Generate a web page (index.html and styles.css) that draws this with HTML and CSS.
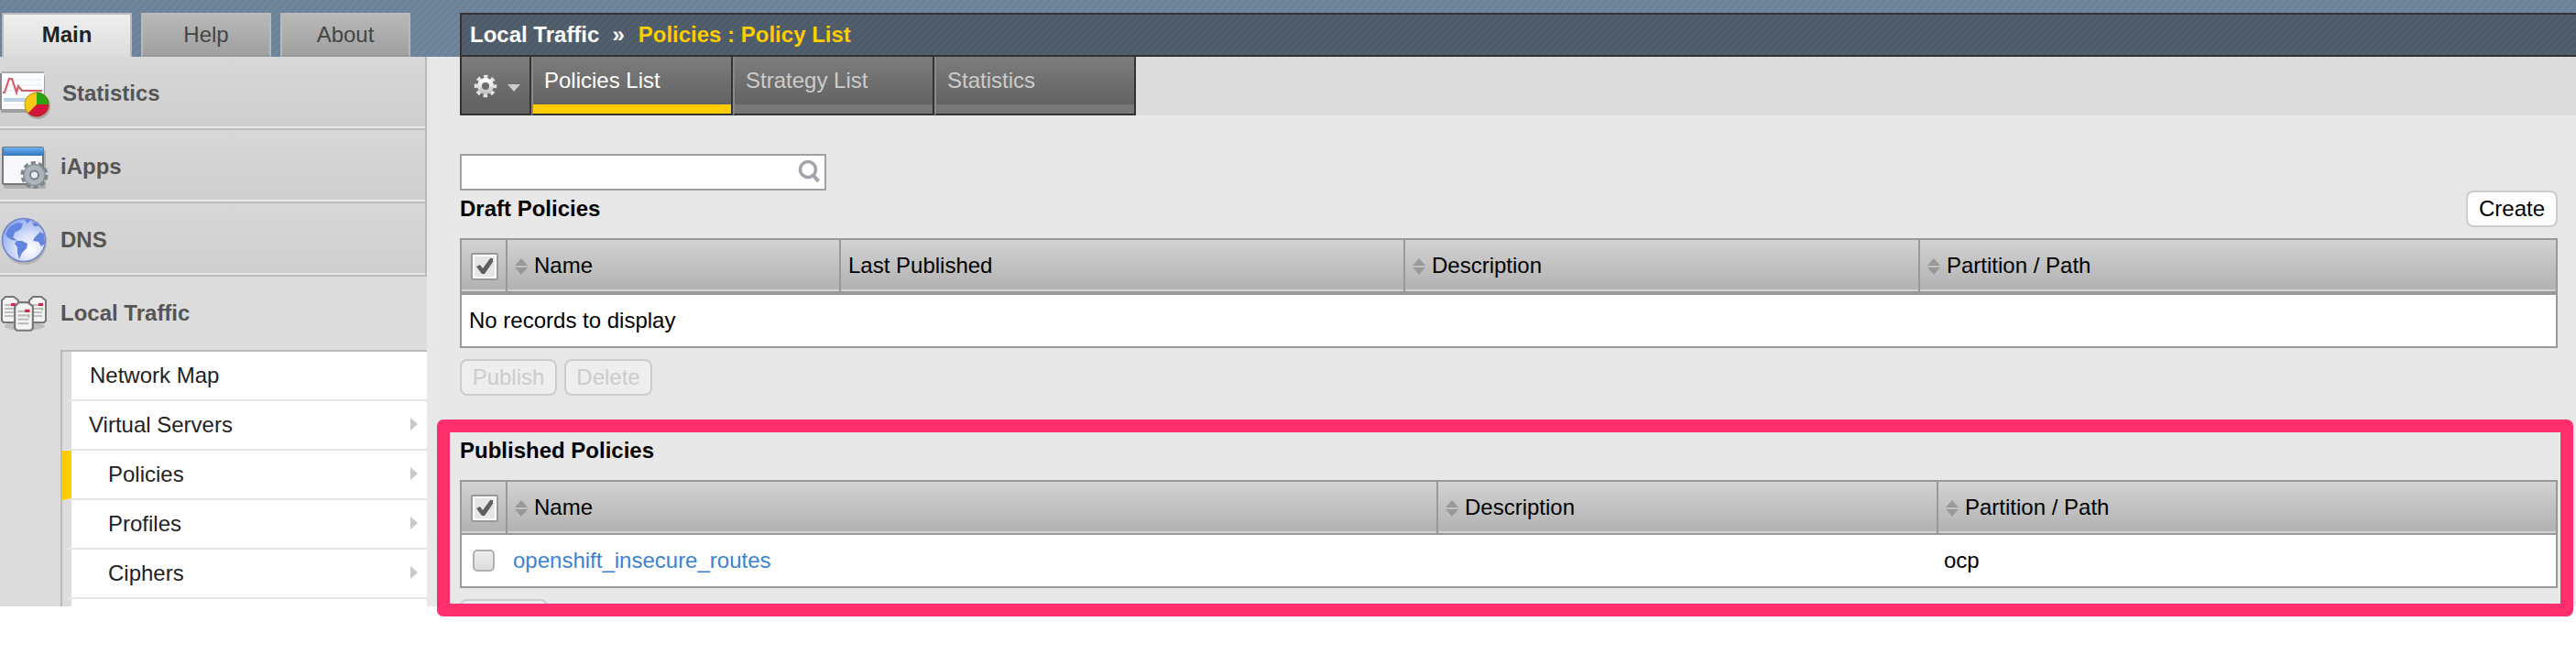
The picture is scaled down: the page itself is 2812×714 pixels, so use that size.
FILE: index.html
```html
<!DOCTYPE html>
<html lang="en">
<head>
<meta charset="utf-8">
<title>Local Traffic - Policy List</title>
<link rel="stylesheet" href="styles.css">
</head>
<body>
<svg width="0" height="0" class="defs">
  <defs>
    <linearGradient id="gearFill" x1="0" y1="0" x2="0" y2="1"><stop offset="0" stop-color="#fff"/><stop offset="1" stop-color="#c4c4c4"/></linearGradient>
    <linearGradient id="blueBar" x1="0" y1="0" x2="0" y2="1"><stop offset="0" stop-color="#68b4f4"/><stop offset="1" stop-color="#3573b8"/></linearGradient>
    <radialGradient id="globe" cx=".65" cy=".7" r=".8"><stop offset="0" stop-color="#fff"/><stop offset=".45" stop-color="#d5defa"/><stop offset="1" stop-color="#86a3ee"/></radialGradient>
    <symbol id="sort" viewBox="0 0 14 18"><path d="M7 0l7 8H0zM0 10h14l-7 8z" fill="#999"/></symbol>
    <symbol id="check" viewBox="0 0 30 30">
      <rect x="1" y="1" width="28" height="28" rx="1" fill="#fff" stroke="#999" stroke-width="2"/>
      <rect x="4" y="4" width="22" height="22" fill="#e6e6e6"/>
      <path d="M6 15l4-2 3 4 8-11h3v4L15 23h-3z" fill="#5f5f5f"/>
    </symbol>
    <symbol id="server" viewBox="0 0 20 32">
      <path d="M1 5l4-4h9l5 4v22l-2 2H3l-2-2z" fill="#f4f4f4" stroke="#777" stroke-width="2"/>
      <path d="M4 10h11M4 14h11M4 18h11M4 22h11" stroke="#bdbdbd" stroke-width="2"/>
      <path d="M11 8h5v3h-5z" fill="#d0284e"/><path d="M14 13h2v3h-2z" fill="#8fd08a"/>
    </symbol>
  </defs>
</svg>
<div class="app">
  <nav class="side">
    <div class="side-tabs">
      <a class="side-tab on">Main</a><a class="side-tab">Help</a><a class="side-tab">About</a>
    </div>
    <a class="section">
      <svg class="sec-icon" viewBox="0 0 56 56">
        <rect x="1" y="8" width="48" height="41" rx="1" fill="#8a8a8a" opacity=".7"/>
        <rect x="2" y="6" width="46" height="39" fill="#fbfcfe"/><path d="M0 6h2v40H0z" fill="#888"/><path d="M2 5h46" stroke="#aaa" stroke-width="2"/>
        <path d="M4 13h42M4 19h42M4 25h42M4 41h42" stroke="#e3e9f4"/><path d="M4 35h26" stroke="#b9d0ea" stroke-width="4"/>
        <path d="M3 27h2l5-15h3l5 15 2-7 4 5h22" fill="none" stroke="#d65c68" stroke-width="2.2"/>
        <circle cx="41" cy="42" r="14" fill="#777" opacity=".45"/>
        <circle cx="40" cy="40" r="13.5" fill="#f7c817"/>
        <path d="M40 40V26.500a13.500 13.500 0 0 1 13.500 13.500z" fill="#2ba50c"/>
        <path d="M40 40h13.500a13.500 13.500 0 0 1-23 9.500z" fill="#d3143b"/>
        <circle cx="40" cy="40" r="13" fill="none" stroke="#664b22" stroke-opacity=".4"/>
      </svg>
      <span>Statistics</span>
    </a>
    <a class="section lean">
      <svg class="sec-icon" viewBox="0 0 56 56">
        <rect x="4" y="10" width="46" height="42" rx="2" fill="#999" opacity=".6"/>
        <rect x="3" y="7" width="44" height="40" rx="1" fill="#f8f8fc" stroke="#777" stroke-width="2"/>
        <path d="M4 7h43v9H4z" fill="url(#blueBar)"/>
        <circle cx="37.500" cy="37" r="13" fill="none" stroke="#7c868c" stroke-width="4" stroke-dasharray="5 3.170"/>
        <circle cx="37.500" cy="37" r="11.500" fill="#aab4ba" stroke="#88939a" stroke-width="1.500"/>
        <circle cx="37.500" cy="37" r="4.500" fill="#eee" stroke="#76828a" stroke-width="2"/>
      </svg>
      <span>iApps</span>
    </a>
    <a class="section lean">
      <svg class="sec-icon" viewBox="0 0 56 56">
        <ellipse cx="27" cy="30" rx="24" ry="25" fill="#888" opacity=".4"/>
        <circle cx="26" cy="28" r="23.500" fill="url(#globe)" stroke="#7288c6" stroke-width="1.600"/>
        <path d="M6 21l5-8 8-4 6 1-2 6-7 4-2 5 5 4-6-1-5-3z" fill="#6286df"/>
        <path d="M18 29l6 0 6 3-1 5-5 5-3 7-2-7 0-6-3-4zM38 25l6-6 4 3 1 10-4 3-3-5-6-1zM27 6l6 0-3 4zM35 9l5 1 2 3-5 0z" fill="#6286df"/>
      </svg>
      <span>DNS</span>
    </a>
    <a class="section open lean">
      <svg class="sec-icon" viewBox="0 0 56 56">
        <ellipse cx="27" cy="42" rx="22" ry="5" fill="#888" opacity=".35"/>
        <use href="#server" x="1" y="9" width="20" height="32"/><use href="#server" x="31" y="9" width="20" height="32"/>
        <use href="#server" x="15" y="15" width="22" height="35"/>
      </svg>
      <span>Local Traffic</span>
    </a>
    <div class="submenu">
      <a class="sub">Network Map</a>
      <a class="sub arrow lean">Virtual Servers</a>
      <a class="sub arrow deep current">Policies</a>
      <a class="sub arrow deep">Profiles</a>
      <a class="sub arrow deep">Ciphers</a>
      <a class="sub"></a>
    </div>
  </nav>
  <main class="main">
    <header class="crumb"><span>Local Traffic</span><span class="sep">»</span><span class="here">Policies : Policy List</span></header>
    <div class="tabbar">
      <a class="gear">
        <svg width="26" height="26" viewBox="-13 -13 26 26"><circle r="10" fill="none" stroke="#e2e2e2" stroke-width="4.500" stroke-dasharray="4.200 3.654" stroke-dashoffset="2.100"/><circle r="6.500" fill="none" stroke="url(#gearFill)" stroke-width="5"/></svg>
        <svg class="caret" width="14" height="8" viewBox="0 0 14 8"><path d="M0 0h14L7 8z" fill="#ccc"/></svg>
      </a>
      <a class="tab on">Policies List</a><a class="tab">Strategy List</a><a class="tab">Statistics</a>
    </div>
    <div class="content">
      <div class="search"><svg width="26" height="28" viewBox="0 0 26 28"><circle cx="11" cy="11" r="8.500" fill="none" stroke="#a3a3ab" stroke-width="3.600"/><path d="M16.500 17l6 7" stroke="#a3a3ab" stroke-width="4"/></svg></div>
      <div class="title-row"><h2>Draft Policies</h2><button class="btn">Create</button></div>
      <section class="grid draft">
        <div class="head">
          <div class="pick"><svg width="30" height="30"><use href="#check"/></svg></div>
          <div class="col"><svg class="sort"><use href="#sort"/></svg>Name</div>
          <div class="col plain">Last Published</div>
          <div class="col"><svg class="sort"><use href="#sort"/></svg>Description</div>
          <div class="col"><svg class="sort"><use href="#sort"/></svg>Partition / Path</div>
        </div>
        <div class="empty">No records to display</div>
      </section>
      <div class="actions"><button class="btn off publish">Publish</button><button class="btn off">Delete</button></div>
      <h2 class="published-title">Published Policies</h2>
      <section class="grid published">
        <div class="head">
          <div class="pick"><svg width="30" height="30"><use href="#check"/></svg></div>
          <div class="col"><svg class="sort"><use href="#sort"/></svg>Name</div>
          <div class="col"><svg class="sort"><use href="#sort"/></svg>Description</div>
          <div class="col"><svg class="sort"><use href="#sort"/></svg>Partition / Path</div>
        </div>
        <div class="row">
          <div class="pick"><i class="box"></i></div>
          <a class="link">openshift_insecure_routes</a>
          <div></div>
          <div class="path">ocp</div>
        </div>
      </section>
      <div class="actions"><button class="btn off cut"></button></div>
    </div>
  </main>
</div>
<div class="highlight"></div>
</body>
</html>
```
FILE: styles.css
```css
* { box-sizing: border-box; }
body { margin: 0; background: #fff; font: 24px/28px "Liberation Sans", Arial, sans-serif; color: #000; position: relative; height: 714px; overflow: hidden; }
.defs { display: block; height: 0; }
svg { display: block; }
.app {
  display: flex; height: 662px; overflow: hidden;
  background:
    linear-gradient(#e8e8e8, #e8e8e8) 0 62px no-repeat,
    repeating-linear-gradient(135deg, #6b8299 0 3.5px, #748a9e 4.2px 5px, #6b8299 5.657px);
}

/* sidebar */
.side { width: 466px; flex: none; display: flex; flex-direction: column; }
.side-tabs { height: 62px; flex: none; padding: 14px 0 0 2px; display: flex; gap: 10px; }
.side-tab { width: 142px; height: 48px; padding-top: 8px; text-align: center; color: #444; border: 2px solid #b2bcc5; border-top-color: #bbb; border-bottom-color: #989898; background: linear-gradient(#b8b8b8, #a0a0a0); }
.side-tab.on { color: #222; font-weight: bold; background: linear-gradient(#efefef, #dcdcdc); border-bottom: 0; }
.section { height: 80px; flex: none; display: flex; align-items: flex-start; border-right: 2px solid #bbb; border-bottom: 2px solid #bbb; background: linear-gradient(#d8d8d8, #cecece); box-shadow: inset 0 -2px #e8e8e8; font-weight: bold; color: #555; }
.section span { padding: 26px 0 0 12px; }
.section.lean span { padding-left: 10px; }
.section.open { background: #dcdcdc; border: 0; box-shadow: none; }
.sec-icon { width: 56px; height: 56px; margin-top: 12px; }
.submenu { flex: 1; margin-left: 66px; border-left: 2px solid #bbb; border-top: 2px solid #bbb; box-shadow: -66px 0 #dcdcdc, -66px -2px #dcdcdc; }
.sub { display: block; height: 54px; padding: 12px 0 0 20px; border-left: 10px solid #dcdcdc; border-bottom: 2px solid #e6e6e6; background: #fff; color: #222; }
.sub.lean { padding-left: 19px; }
.sub.deep { padding-left: 40px; }
.sub.current { border-left-color: #fc0; }
.sub.arrow { display: flex; justify-content: space-between; }
.sub.arrow::after { content: ""; margin: 6px 10px 0 0; width: 8px; height: 14px; background: #c9c9c9; clip-path: polygon(0 0, 100% 50%, 0 100%); }

/* header and tabs */
.main { flex: 1; padding: 14px 0 0 36px; }
.crumb { height: 48px; border: 2px solid #333; border-right: 0; padding: 8px 0 0 9px; display: flex; font-weight: bold; color: #fff; background: repeating-linear-gradient(135deg, #4e5b69 0 3.5px, #56626f 4.2px 5px, #4e5b69 5.657px); }
.sep { padding: 0 15px 0 14px; }
.here { color: #fc0; }
.tabbar { height: 64px; display: flex; color: #ccc; background: #dcdcdc; }
.gear, .tab { height: 64px; border-right: 2px solid #333; border-bottom: 2px solid #333; background: linear-gradient(#7d7d7d, #636363 52px); }
.gear { width: 78px; border-left: 2px solid #333; padding: 19px 0 0 13px; display: flex; gap: 11px; }
.caret { margin-top: 11px; }
.tab { width: 220px; padding: 12px 0 0 12px; border-left: 2px solid #8a8a8a; box-shadow: inset 0 -10px #777; }
.tab.on { color: #fff; box-shadow: inset 0 -10px #fc0; }

/* content */
.content { height: 536px; padding: 42px 20px 0 0; background: #e8e8e8; }
.search { width: 400px; height: 40px; background: #fff; border: 2px solid #a0a0a0; padding: 4px 3px 0 0; display: flex; justify-content: flex-end; }
.title-row { display: flex; justify-content: space-between; height: 52px; }
h2 { margin: 0; font-size: 24px; line-height: 28px; }
.title-row h2 { padding-top: 6px; }
.btn { height: 40px; border: 2px solid #ccc; border-radius: 8px; background: #fff; font: inherit; color: #000; padding: 0; width: 100px; }
.btn.off { color: #ccc; background: #eee; width: 96px; }
.btn.publish { width: 106px; }
.grid { border: 2px solid #999; background: #fff; }
.draft { height: 120px; }
.published { height: 118px; }
.head, .row { display: grid; }
.draft .head { grid-template-columns: 48px 364px 616px 562px 1fr; }
.published .head, .published .row { grid-template-columns: 48px 1016px 546px 1fr; }
.head { height: 58px; background: linear-gradient(#d2d2d2, #b2b2b2 54px, #d0d0d0 54px); border-bottom: 2px solid #999; }
.draft .head { height: 60px; border-bottom-width: 4px; }
.col { display: flex; border-left: 2px solid #999; padding: 14px 0 0 8px; }
.col.plain { padding-left: 8px; }
.sort { width: 14px; height: 18px; margin: 6px 7px 0 0; }
.head .pick { padding: 14px 0 0 10px; }
.empty { padding: 14px 0 0 8px; }
.actions { display: flex; gap: 8px; margin-top: 12px; }
.published-title { margin: 46px 0 18px; }
.row { padding-top: 14px; }
.box { display: block; width: 24px; height: 24px; margin: 2px 0 0 12px; border: 2px solid #b0b0b0; border-radius: 5px; background: linear-gradient(#eee, #dcdcdc); }
.link { color: #3c82d2; padding-left: 8px; }
.path { padding-left: 8px; }

/* callout frame over the lower table */
.highlight { position: absolute; left: 477px; top: 458px; width: 2332px; height: 215px; border: 14px solid #ff2f6d; border-radius: 7px; }
```
